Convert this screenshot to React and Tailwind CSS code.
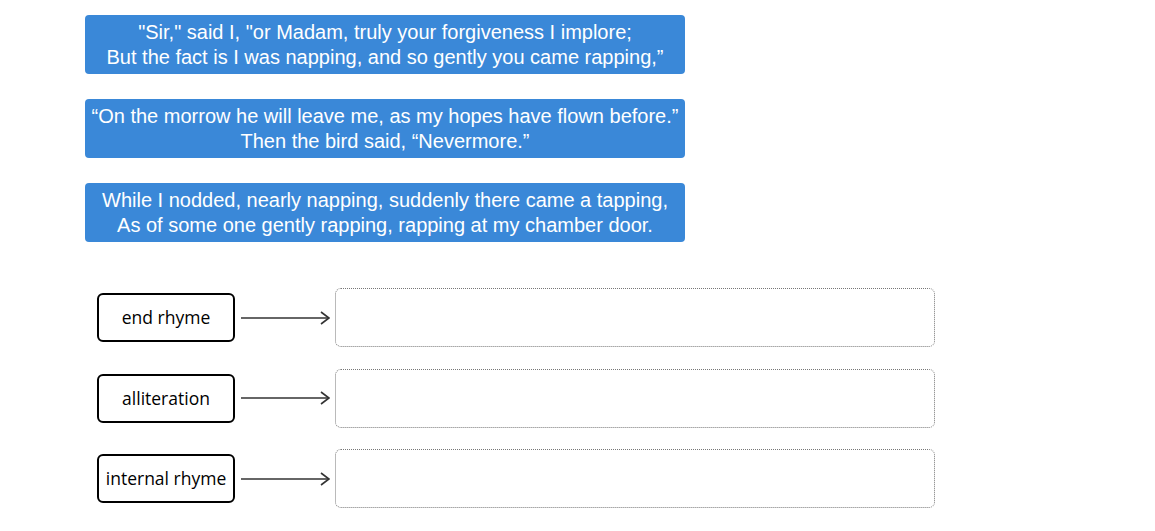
import React from 'react';

const quotes = [
  ['"Sir," said I, "or Madam, truly your forgiveness I implore;', 'But the fact is I was napping, and so gently you came rapping,\u201d'],
  ['\u201cOn the morrow he will leave me, as my hopes have flown before.\u201d', 'Then the bird said, \u201cNevermore.\u201d'],
  ['While I nodded, nearly napping, suddenly there came a tapping,', 'As of some one gently rapping, rapping at my chamber door.'],
];

const terms = ['end rhyme', 'alliteration', 'internal rhyme'];

const Arrow = () => (
  <svg width="89" height="16" viewBox="0 0 89 16" className="shrink-0">
    <line x1="0" y1="8" x2="88" y2="8" stroke="#333" strokeWidth="1.3" />
    <polyline points="80,2 88,8 80,14" fill="none" stroke="#333" strokeWidth="1.6" />
  </svg>
);

const App = () => {
  return (
    <div className="bg-white min-h-[531px] w-[1155px] pt-[15px] pl-[85px]">
      {/* draggable quotes */}
      <div className="flex flex-col gap-[25px]">
        {quotes.map((q, i) => (
          <div
            key={i}
            className="w-[600px] h-[59px] rounded-[4px] bg-[#3a88d8] text-white flex flex-col justify-center items-center text-[20px] leading-[25px] whitespace-nowrap font-['Liberation_Sans',Arial,sans-serif]"
          >
            <div>{q[0]}</div>
            <div>{q[1]}</div>
          </div>
        ))}
      </div>

      {/* matching rows */}
      <div className="flex flex-col gap-[21.5px] mt-[46px]">
        {terms.map((t) => (
          <div key={t} className="flex items-center h-[59px]">
            <div className="ml-[12px] w-[138px] h-[49px] border-2 border-black rounded-[6px] flex items-center justify-center text-[17.5px] text-black font-['Open_Sans','Noto_Sans',sans-serif]">
              {t}
            </div>
            <div className="ml-[6px] mr-[5px] flex items-center">
              <Arrow />
            </div>
            <div className="w-[600px] h-[59px] border border-dotted border-[#777] rounded-[6px]" />
          </div>
        ))}
      </div>
    </div>
  );
};

export default App;
